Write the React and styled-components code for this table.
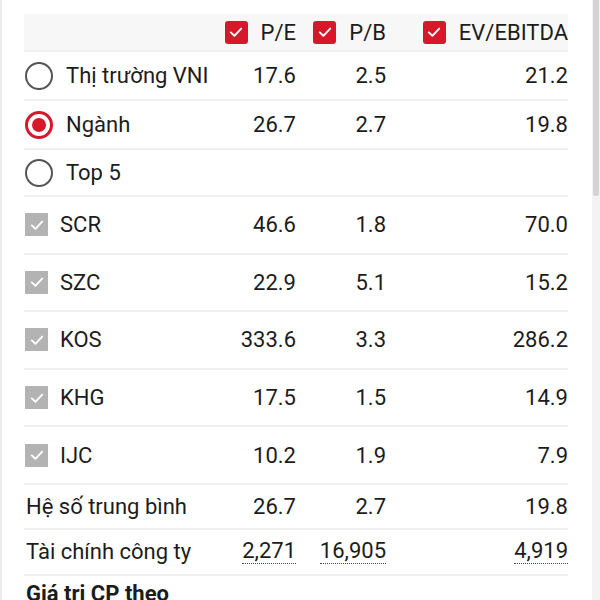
import React from "react";
import styled, { createGlobalStyle } from "styled-components";

const GlobalStyle = createGlobalStyle`
  html, body {
    margin: 0;
    padding: 0;
    background: #fff;
    overflow: hidden;
  }
  body {
    font-family: Roboto, "Liberation Sans", sans-serif;
    color: #1c1c1c;
  }
`;

const markets = [
  { name: "Thị trường VNI", pe: "17.6", pb: "2.5", ev: "21.2" },
  { name: "Ngành", pe: "26.7", pb: "2.7", ev: "19.8", selected: true },
  { name: "Top 5" },
];

const stocks = [
  { name: "SCR", pe: "46.6", pb: "1.8", ev: "70.0" },
  { name: "SZC", pe: "22.9", pb: "5.1", ev: "15.2" },
  { name: "KOS", pe: "333.6", pb: "3.3", ev: "286.2" },
  { name: "KHG", pe: "17.5", pb: "1.5", ev: "14.9" },
  { name: "IJC", pe: "10.2", pb: "1.9", ev: "7.9" },
];

function Check() {
  return (
    <svg width="16" height="16" viewBox="0 0 16 16">
      <path
        d="M2.8 8.4 L6.4 11.8 L13.2 4.6"
        fill="none"
        stroke="#fff"
        strokeWidth="1.9"
        strokeLinecap="round"
        strokeLinejoin="round"
      />
    </svg>
  );
}

export default function App() {
  return (
    <>
      <GlobalStyle />
      <Screen>
        <Panel>
          <Grid>
            <HeadRow>
              <span />
              <HeadCell>
                <RedBox>
                  <Check />
                </RedBox>
                P/E
              </HeadCell>
              <HeadCell>
                <RedBox>
                  <Check />
                </RedBox>
                P/B
              </HeadCell>
              <HeadCell>
                <RedBox>
                  <Check />
                </RedBox>
                EV/EBITDA
              </HeadCell>
            </HeadRow>

            {markets.map((m) => (
              <Row key={m.name} $height={m.name === "Top 5" ? 47 : 49}>
                <Label $gap={13}>
                  <Radio $on={m.selected} />
                  {m.name}
                </Label>
                <Num>{m.pe}</Num>
                <Num>{m.pb}</Num>
                <Num>{m.ev}</Num>
              </Row>
            ))}

            {stocks.map((s) => (
              <Row key={s.name} $height={57.6}>
                <Label $gap={12}>
                  <GrayBox>
                    <Check />
                  </GrayBox>
                  {s.name}
                </Label>
                <Num>{s.pe}</Num>
                <Num>{s.pb}</Num>
                <Num>{s.ev}</Num>
              </Row>
            ))}

            <Row $height={45}>
              <Label>Hệ số trung bình</Label>
              <Num>26.7</Num>
              <Num>2.7</Num>
              <Num>19.8</Num>
            </Row>
            <Row $height={46}>
              <Label>Tài chính công ty</Label>
              <Num>
                <Dotted>2,271</Dotted>
              </Num>
              <Num>
                <Dotted>16,905</Dotted>
              </Num>
              <Num>
                <Dotted>4,919</Dotted>
              </Num>
            </Row>
          </Grid>
          <SectionTitle>Giá trị CP theo</SectionTitle>
        </Panel>
        <ScrollTrack>
          <ScrollThumb />
        </ScrollTrack>
      </Screen>
    </>
  );
}

const Screen = styled.div`
  height: 600px;
  display: flex;
  overflow: hidden;
  border-left: 2px solid #ececec;
  box-sizing: border-box;
`;

const Panel = styled.div`
  flex: 1;
  min-width: 0;
  padding: 14px 24px 0 22px;
`;

const ScrollTrack = styled.div`
  width: 8px;
  flex-shrink: 0;
  background: #f3f3f3;
  display: flex;
  flex-direction: column;
`;

const ScrollThumb = styled.div`
  height: 196px;
  margin: 0 1px;
  background: #d4d4d4;
  border-radius: 0 0 2px 2px;
`;

const Grid = styled.div`
  display: grid;
  grid-template-columns: minmax(0, 1fr) 90px 90px 182px;
  font-size: 22px;
`;

const HeadRow = styled.div`
  display: contents;
  & > * {
    height: 38px;
    background: #f7f7f7;
    border-bottom: 2px solid #f0f0f0;
    box-sizing: border-box;
  }
`;

const HeadCell = styled.div`
  display: flex;
  align-items: center;
  justify-content: flex-end;
  gap: 13px;
  color: #1c1c1c;
`;

const RedBox = styled.span`
  width: 23px;
  height: 23px;
  border-radius: 3px;
  background: #d7182a;
  display: flex;
  align-items: center;
  justify-content: center;
`;

const GrayBox = styled.span`
  width: 23px;
  height: 23px;
  flex-shrink: 0;
  background: #b3b3b3;
  display: flex;
  align-items: center;
  justify-content: center;
`;

const Row = styled.div`
  display: contents;
  & > * {
    height: ${(p) => p.$height}px;
    border-bottom: 2px solid #f0f0f0;
    box-sizing: border-box;
  }
`;

const Label = styled.div`
  display: flex;
  align-items: center;
  gap: ${(p) => p.$gap || 0}px;
  white-space: nowrap;
  overflow: visible;
  padding-left: ${(p) => (p.$gap ? 1 : 2)}px;
`;

const Num = styled.div`
  display: flex;
  align-items: center;
  justify-content: flex-end;
`;

const Radio = styled.span`
  width: 28px;
  height: 28px;
  flex-shrink: 0;
  border-radius: 50%;
  box-sizing: border-box;
  border: ${(p) => (p.$on ? "3px solid #d7182a" : "2.5px solid #555")};
  display: flex;
  align-items: center;
  justify-content: center;

  &::after {
    content: "";
    display: ${(p) => (p.$on ? "block" : "none")};
    width: 14px;
    height: 14px;
    border-radius: 50%;
    background: #d7182a;
  }
`;

const Dotted = styled.span`
  border-bottom: 1px dotted #444;
  line-height: 24px;
`;

const SectionTitle = styled.div`
  font-size: 22px;
  font-weight: 700;
  padding: 5px 2px 0;
  white-space: nowrap;
`;
